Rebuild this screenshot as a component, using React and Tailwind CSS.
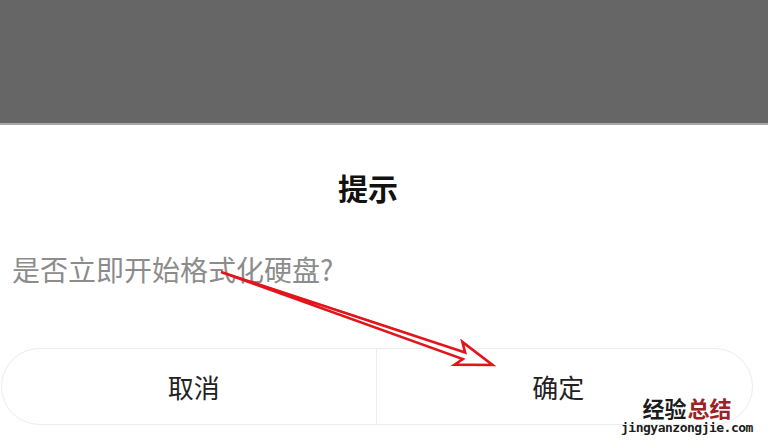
const cjk = { fontFamily: '"Noto Sans CJK SC", "Noto Sans", sans-serif' };

const Arrow = () => (
  <svg
    className="absolute left-0 top-0 pointer-events-none"
    width="768"
    height="446"
    viewBox="0 0 768 446"
  >
    <g transform="translate(221 272) rotate(18.9)">
      <polygon
        points="0,0 257,-3 251,-12 287,0 251,12 257,4"
        fill="white"
        stroke="#e3151c"
        strokeWidth="2.6"
        strokeLinejoin="miter"
      />
      <line x1="0" y1="0" x2="200" y2="-2.4" stroke="#e3151c" strokeWidth="1.6" />
    </g>
  </svg>
);

export default function App() {
  return (
    <div className="relative w-[768px] h-[446px] overflow-hidden bg-white" style={cjk}>
      <div className="h-[125px] bg-[#666666] border-b-2 border-[#a8a8a8]" />
      <div className="pr-[32px] pt-[47px] text-center text-[30px] leading-[30px] font-bold text-[#111]">
        提示
      </div>
      <div className="pl-[12px] mt-[53px] text-[28px] leading-[28px] text-[#8c8c8c]">
        是否立即开始格式化硬盘?
      </div>
      <div className="mt-[65px] ml-[1px] w-[752px] h-[77px] rounded-full border border-[#ececec] flex">
        <div className="flex-1 flex items-center justify-center pl-[10px] text-[26px] text-[#222] border-r border-[#ececec]">
          取消
        </div>
        <div className="flex-1 flex items-center justify-center pr-[12px] text-[26px] text-[#222]">
          确定
        </div>
      </div>
      <Arrow />
      <div className="absolute left-[620px] top-[395px] w-[134px] flex flex-col items-center">
        <div className="flex h-[23px] items-center text-[22px] leading-[22px] font-bold gap-[1px]">
          <span className="block text-[#1c1c1c]">经验</span>
          <span className="block text-[#9b2226]">总结</span>
        </div>
        <div
          className="mt-[2px] text-[13px] leading-[16px] font-bold tracking-[-0.5px] text-[#1c1c1c]"
          style={{ fontFamily: '"DejaVu Sans Mono", "Liberation Mono", monospace' }}
        >
          jingyanzongjie.com
        </div>
      </div>
    </div>
  );
}
